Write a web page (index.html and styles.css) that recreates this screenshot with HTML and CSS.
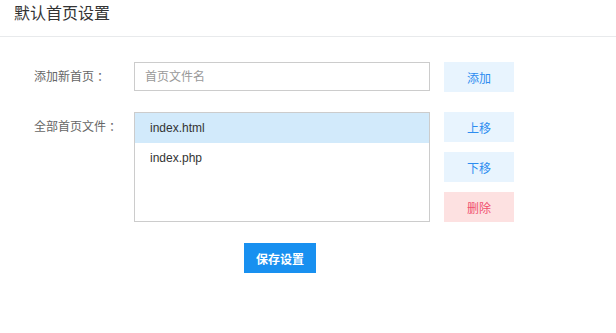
FILE: index.html
```html
<!DOCTYPE html>
<html lang="zh-CN">
<head>
    <meta charset="UTF-8">
    <meta name="viewport" content="width=device-width, initial-scale=1.0">
    <title>默认首页设置</title>
    <link rel="stylesheet" href="styles.css">
</head>
<body>
    <div class="header">
        <h1>默认首页设置</h1>
    </div>

    <div class="form">
        <div class="row">
            <label class="label">添加新首页<span class="colon">：</span></label>
            <input type="text" class="text-input" placeholder="首页文件名">
            <div class="actions">
                <button class="btn btn-light">添加</button>
            </div>
        </div>

        <div class="row row-list">
            <label class="label">全部首页文件<span class="colon">：</span></label>
            <ul class="file-list">
                <li class="selected">index.html</li>
                <li>index.php</li>
            </ul>
            <div class="actions">
                <button class="btn btn-light">上移</button>
                <button class="btn btn-light">下移</button>
                <button class="btn btn-danger">删除</button>
            </div>
        </div>

        <div class="submit">
            <button class="btn btn-primary">保存设置</button>
        </div>
    </div>
</body>
</html>
```

FILE: styles.css
```css
body {
    margin: 0;
    font-family: "Liberation Sans", "Noto Sans CJK SC", sans-serif;
    font-size: 12px;
    color: #333;
    background-color: white;
}

.header {
    height: 36px;
    border-bottom: 1px solid #e8eaec;
    padding-left: 14px;
}

h1 {
    margin: 0;
    font-size: 16px;
    font-weight: normal;
    line-height: 28px;
    color: #333;
}

.form {
    padding: 25px 0 0 34px;
}

.row {
    display: flex;
    align-items: flex-start;
}

.row-list {
    margin-top: 20px;
}

.label {
    width: 100px;
    height: 30px;
    line-height: 30px;
    color: #666;
}

/* 冒号稍微右移，看起来像居中 */
.colon {
    padding-left: 3px;
}

.text-input {
    box-sizing: border-box;
    width: 296px;
    height: 29px;
    margin: 0;
    padding: 0 10px;
    border: 1px solid #ccc;
    font-family: inherit;
    font-size: 12px;
    color: #333;
    outline: none;
}

.text-input::placeholder {
    color: #999;
}

.file-list {
    box-sizing: border-box;
    width: 296px;
    height: 110px;
    margin: 0;
    padding: 0;
    list-style: none;
    border: 1px solid #ccc;
}

.file-list li {
    height: 30px;
    line-height: 30px;
    padding-left: 15px;
    color: #333;
}

.file-list li.selected {
    background-color: #d2eafb;
}

.actions {
    display: flex;
    flex-direction: column;
    gap: 10px;
    margin-left: 14px;
}

.btn {
    width: 70px;
    height: 30px;
    padding: 0;
    border: none;
    font-family: inherit;
    font-size: 12px;
    cursor: pointer;
}

.btn-light {
    background-color: #e8f4fe;
    color: #2d8cf0;
}

.btn-danger {
    background-color: #fde1e1;
    color: #f0506e;
}

.btn-primary {
    width: 72px;
    background-color: #1890f0;
    color: white;
    font-weight: bold;
}

.submit {
    margin-top: 21px;
    padding-left: 210px;
}
```
